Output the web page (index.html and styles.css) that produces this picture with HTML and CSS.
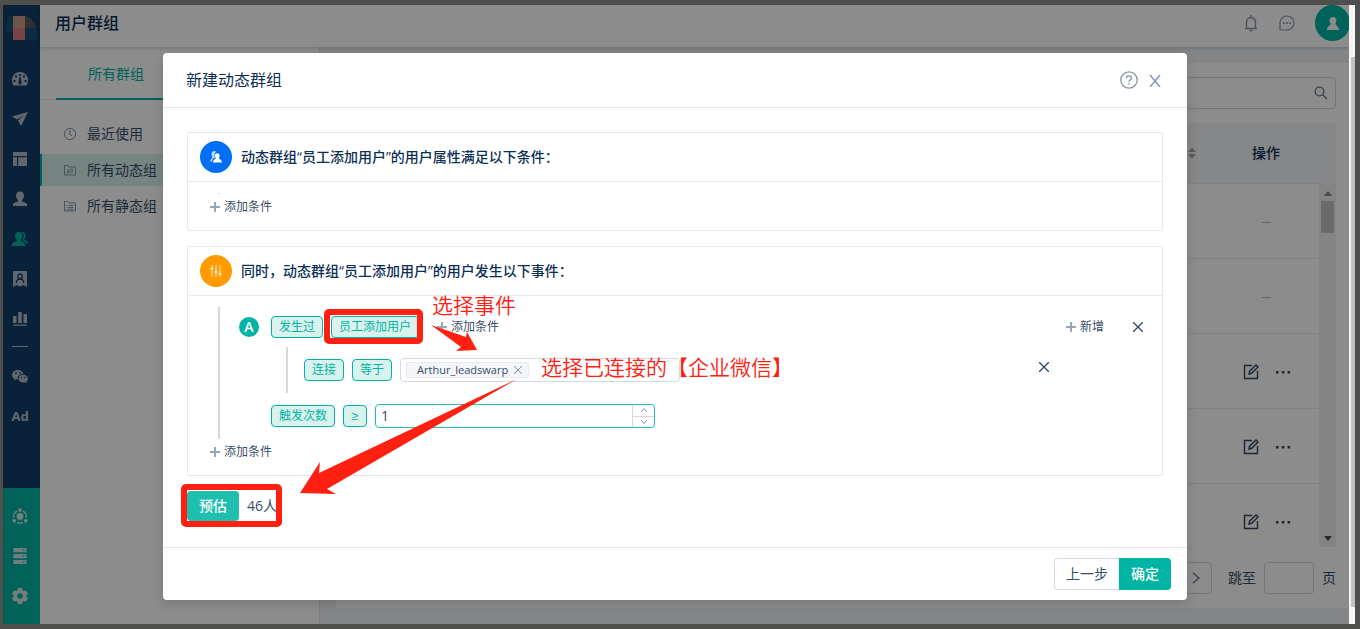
FILE: index.html
```html
<!DOCTYPE html>
<html lang="zh-CN">
<head>
    <meta charset="UTF-8">
    <meta name="viewport" content="width=device-width, initial-scale=1.0">
    <title>用户群组</title>
    <link rel="stylesheet" href="styles.css">
</head>
<body>
    <div class="app">
        <nav class="sidebar">
            <a class="logo" href="#" aria-label="首页">
                <svg width="32" height="32" viewBox="0 0 32 32">
                    <path d="M2 2Q1 0 7 0V16H1Q-1 9 2 2z" fill="#1c4f7c"/>
                    <path d="M7 0H19V12H7z" fill="#c89b88"/>
                    <path d="M19 0Q26 0 30 12H19z" fill="#55585c"/>
                    <path d="M7 12H19V24H7z" fill="#dc7a7e"/>
                    <path d="M19 12H30Q33 20 31 24H19z" fill="#1c4f7c"/>
                    <path d="M9 24H19V32Q12 30 9 24z" fill="#1b3c60"/>
                </svg>
            </a>
            <div class="side-top">
                <a href="#" aria-label="仪表盘"><svg width="16" height="16" viewBox="0 0 16 16"><path fill="currentColor" fill-rule="evenodd" d="M8 1a8 8 0 0 0-8 8c0 2 .6 4 1.500 5.500h13A9 9 0 0 0 16 9a8 8 0 0 0-8-8zM7 3h2v1.800H7zM3 4.500h2v2H3zM11 4.500h2v2h-2zM1.500 9h2v2h-2zM12.500 9h2v2h-2zM7.400 6h1.200l.8 5.500a1.500 1.500 0 1 1-2.800 0z"/></svg></a>
                <a href="#" aria-label="发送"><svg width="16" height="16" viewBox="0 0 16 16"><path fill="currentColor" d="M16 1 0 5.500 5 8.500 12 4 6 9.500 9 15z"/></svg></a>
                <a href="#" aria-label="页面"><svg width="16" height="16" viewBox="0 0 16 16"><path fill="currentColor" d="M1 1h14v4H1zM1 6.200h4V15H1zM6.200 6.200H15V15H6.200z"/></svg></a>
                <a href="#" aria-label="用户"><svg width="16" height="16" viewBox="0 0 16 16"><path fill="currentColor" d="M8 .5c2.500 0 4 1.800 4 4.200 0 1.800-.8 3.300-2 4.300v1.300c0 .6 5 1.200 5 3.200V15H1v-1.500c0-2 5-2.600 5-3.200V9C4.800 8 4 6.500 4 4.700 4 2.300 5.500.5 8 .5z"/></svg></a>
                <a class="on" href="#" aria-label="用户群组"><svg width="16" height="16" viewBox="0 0 16 16"><path fill="currentColor" d="M6.800 1c2.300 0 3.700 1.600 3.700 3.800 0 1.700-.8 3-1.800 3.900V10c0 .7 4.300 1.300 4.300 3.400V15H0v-1.600C0 11.300 5 10.700 5 10V8.700C3.900 7.800 3 6.500 3 4.800 3 2.600 4.500 1 6.800 1z"/><path d="M10 1.500c2.500.2 3.300 2.300 2.500 4.500-.4 1.200-1.200 1.900-1 3 .3 1 3.800 1.200 3.800 3.500" fill="none" stroke="currentColor" stroke-width="1.500"/></svg></a>
                <a href="#" aria-label="标签"><svg width="16" height="16" viewBox="0 0 16 16"><path fill="currentColor" d="M1 0h14v16l-3.500-2L8 15.500 4.500 14 1 16z"/><circle cx="8" cy="5.300" r="2.300" fill="none" stroke="#123c68" stroke-width="1.300"/><path d="M4.200 12Q4.500 8 8 8t3.800 4" fill="none" stroke="#123c68" stroke-width="1.300"/></svg></a>
                <a href="#" aria-label="统计"><svg width="16" height="16" viewBox="0 0 16 16"><path fill="currentColor" d="M1 5h3.500v7H1zM6.200 1h3.500v11H6.200zM11.500 3H15v9h-3.500zM1 13.500h14v1.200H1z"/></svg></a>
                <hr>
                <a href="#" aria-label="微信"><svg width="16" height="16" viewBox="0 0 16 16"><path fill="currentColor" fill-rule="evenodd" d="M6 2C2.700 2 0 4.200 0 6.900c0 1.600.9 2.900 2.300 3.800L1.800 12.500l2.200-1.200c.7.200 1.200.3 1.800.2C5 8.500 7.500 5.800 11.500 6 11 3.700 8.700 2 6 2zM4 4.300a.8.800 0 1 1 0 1.700.8.800 0 0 1 0-1.700zm4 0a.8.800 0 1 1 0 1.700.8.800 0 0 1 0-1.700z"/><path fill="currentColor" fill-rule="evenodd" d="M11.200 6.800c-2.700 0-4.700 1.800-4.700 3.900s2.100 3.900 4.700 3.900c.6 0 1.200-.1 1.700-.3l1.700.9-.5-1.500c1.100-.7 1.900-1.800 1.900-3 0-2.100-2.100-3.900-4.800-3.900zM9.600 8.800a.7.700 0 1 1 0 1.400.7.700 0 0 1 0-1.400zm3.200 0a.7.700 0 1 1 0 1.400.7.700 0 0 1 0-1.400z"/></svg></a>
                <a class="ad" href="#">Ad</a>
            </div>
            <div class="side-bottom">
                <a href="#" aria-label="连接"><svg width="16" height="16" viewBox="0 0 16 16"><circle cx="8" cy="8.500" r="3.400" fill="currentColor"/><g fill="currentColor"><circle cx="8" cy="2" r="1.900"/><circle cx="2.200" cy="12.800" r="1.900"/><circle cx="13.800" cy="12.800" r="1.900"/></g><path d="M5 3.200A6.300 6.300 0 0 0 1.700 10M11 3.200A6.300 6.300 0 0 1 14.300 10M5 14.700q3 1 6 0" fill="none" stroke="currentColor" stroke-width="1.300"/></svg></a>
                <a href="#" aria-label="数据"><svg width="16" height="16" viewBox="0 0 16 16"><path fill="currentColor" fill-rule="evenodd" d="M1.500 0h13v4.300h-13zM1.500 6h13v4.300h-13zM1.500 12h13v4h-13zM10.500 1.600v1h2v-1zM10.500 7.600v1h2v-1zM10.500 13.600v1h2v-1z"/></svg></a>
                <a href="#" aria-label="设置"><svg width="16" height="16" viewBox="0 0 16 16"><path fill="currentColor" fill-rule="evenodd" d="M6 0h4l.5 2.300 1.300.7 2.200-.8 2 3.500-1.700 1.500v1.600l1.700 1.500-2 3.500-2.200-.8-1.300.7L10 16H6l-.5-2.300-1.300-.7-2.200.8-2-3.500 1.700-1.500V7.200L0 5.700l2-3.500 2.200.8 1.300-.7zM8 5.200a2.800 2.800 0 1 0 0 5.600 2.800 2.800 0 0 0 0-5.600z"/></svg></a>
            </div>
        </nav>

        <div class="main">
            <header class="topbar">
                <h1>用户群组</h1>
                <div class="top-actions">
                    <button class="icon-btn" aria-label="通知"><svg width="16" height="18" viewBox="0 0 16 18"><path d="M2 14.500h12M3.500 14V8a4.500 4.500 0 0 1 9 0v6M8 3.500V1M6.500 16.500h3" fill="none" stroke="currentColor" stroke-width="1.400"/></svg></button>
                    <button class="icon-btn" aria-label="消息"><svg width="16" height="16" viewBox="0 0 16 16"><path d="M1 15V8a7 7 0 1 1 7 7z" fill="none" stroke="currentColor" stroke-width="1.200"/><path d="M4 7.300h1.600v1.600H4zM7.200 7.300h1.600v1.600H7.200zM10.400 7.300H12v1.600h-1.600z" fill="currentColor"/></svg></button>
                    <button class="avatar" aria-label="账户"><svg width="12" height="13" viewBox="0 0 12 13"><path fill="currentColor" d="M6 0c2.200 0 3.500 1.400 3.500 3.500C9.500 5.200 8.300 6 8.300 7.200 8.300 8.200 12 9 12 13H0c0-4 3.700-4.800 3.700-5.800C3.700 6 2.500 5.200 2.500 3.500 2.500 1.400 3.800 0 6 0z"/></svg></button>
                </div>
            </header>
            <div class="columns">
                <aside class="groups">
                    <div class="tabs"><a class="tab" href="#">所有群组</a></div>
                    <ul class="group-menu">
                        <li><a href="#"><svg width="14" height="14" viewBox="0 0 14 14"><circle cx="7" cy="7" r="5.600"/><path d="M6.800 3.500v4l2.200 1.300"/></svg>最近使用</a></li>
                        <li class="current"><a href="#"><svg width="14" height="14" viewBox="0 0 14 14"><path d="M1.500 2.500H5L6 4h6.500v8h-11zM4 7h6L8.500 5.500M10 9H4l1.500 1.500"/></svg>所有动态组</a></li>
                        <li><a href="#"><svg width="14" height="14" viewBox="0 0 14 14"><path d="M1.500 2.500H5L6 4h6.500v8h-11zM3.500 6.500h1M5.500 6.500h5M3.500 8.500h1M5.500 8.500h5M3.500 10.300h1M5.500 10.300h5"/></svg>所有静态组</a></li>
                    </ul>
                </aside>
                <section class="content">
                    <div class="card">
                        <div class="search">
                            <input type="text" aria-label="搜索">
                            <svg width="14" height="14" viewBox="0 0 14 14"><circle cx="5.500" cy="5.500" r="4.300"/><path d="M8.700 8.700 13 13"/></svg>
                        </div>
                        <table class="list list-head">
                            <tr>
                                <th class="sortable"><svg width="8" height="12" viewBox="0 0 8 12"><path d="M0 5l4-4.500L8 5zM0 7h8l-4 4.500z" fill="#a5a5a5"/></svg></th>
                                <th class="ops">操作</th>
                                <th class="gutter"></th>
                            </tr>
                        </table>
                        <div class="list-body">
                            <table class="list">
                                <tr><td></td><td class="ops"><i class="dash"></i></td></tr>
                                <tr><td></td><td class="ops"><i class="dash"></i></td></tr>
                                <tr><td></td><td class="ops"><div class="row-ops"><button class="icon-btn" aria-label="编辑"><svg width="16" height="16" viewBox="0 0 16 16"><path d="M9 1.500H1.500v13h13V7M6 10l.6-2.800L13 1l2 2-6.300 6.300z"/></svg></button><button class="icon-btn" aria-label="更多"><svg width="16" height="16" viewBox="0 0 16 16"><path class="dots" d="M1 7h2.500v2.500H1zM6.800 7h2.500v2.500H6.800zM12.600 7h2.500v2.500h-2.500z"/></svg></button></div></td></tr>
                                <tr><td></td><td class="ops"><div class="row-ops"><button class="icon-btn" aria-label="编辑"><svg width="16" height="16" viewBox="0 0 16 16"><path d="M9 1.500H1.500v13h13V7M6 10l.6-2.800L13 1l2 2-6.300 6.300z"/></svg></button><button class="icon-btn" aria-label="更多"><svg width="16" height="16" viewBox="0 0 16 16"><path class="dots" d="M1 7h2.500v2.500H1zM6.800 7h2.500v2.500H6.800zM12.600 7h2.500v2.500h-2.500z"/></svg></button></div></td></tr>
                                <tr><td></td><td class="ops"><div class="row-ops"><button class="icon-btn" aria-label="编辑"><svg width="16" height="16" viewBox="0 0 16 16"><path d="M9 1.500H1.500v13h13V7M6 10l.6-2.800L13 1l2 2-6.300 6.300z"/></svg></button><button class="icon-btn" aria-label="更多"><svg width="16" height="16" viewBox="0 0 16 16"><path class="dots" d="M1 7h2.500v2.500H1zM6.800 7h2.500v2.500H6.800zM12.600 7h2.500v2.500h-2.500z"/></svg></button></div></td></tr>
                            </table>
                            <div class="list-scroll">
                                <svg width="8" height="5" viewBox="0 0 8 5"><path d="M0 5l4-5 4 5z" fill="#858585"/></svg>
                                <div class="list-thumb"></div>
                                <svg class="down" width="8" height="5" viewBox="0 0 8 5"><path d="M0 0h8L4 5z" fill="#505050"/></svg>
                            </div>
                        </div>
                        <div class="pager">
                            <button class="next" aria-label="下一页"><svg width="8" height="12" viewBox="0 0 8 12"><path d="M1 1l6 5-6 5"/></svg></button>
                            <label for="page">跳至</label>
                            <input id="page" type="text">
                            <span>页</span>
                        </div>
                    </div>
                </section>
            </div>
        </div>

        <div class="mask">
            <div class="modal" role="dialog" aria-labelledby="modalTitle">
                <div class="modal-head">
                    <h2 id="modalTitle">新建动态群组</h2>
                    <button class="icon-btn" aria-label="帮助"><svg width="18" height="18" viewBox="0 0 18 18" fill="none" stroke="currentColor"><circle cx="9" cy="9" r="8.200" stroke-width="1.300"/><path d="M6.500 7.200c0-3 5-3 5-.2 0 1.700-2.500 1.800-2.500 3.800M9 12v1.500" stroke-width="1.400"/></svg></button>
                    <button class="icon-btn" aria-label="关闭"><svg width="12" height="14" viewBox="0 0 12 14" fill="none" stroke="currentColor" stroke-width="1.400"><path d="M1 2l10 12M11 2L1 14"/></svg></button>
                </div>

                <div class="modal-body">
                    <section class="panel">
                        <div class="panel-head">
                            <span class="round blue"><svg width="14" height="14" viewBox="0 0 14 14"><path fill="#bcd8ff" d="M2.500 4.200C2.500 2 3.800 1 5.500 1c.8 0 1.300.2 1.800.6C5 3.500 5 6 6 7.500 4 8.500 3 10 3 11.500H1C1 9 3.500 8.500 3.500 7c-.7-.7-1-1.500-1-2.800z"/><path fill="#fff" d="M8.300 3.200c1.500 0 2.400 1 2.400 2.500 0 1.200-.9 1.700-.9 2.600 0 .8 3.200 1.200 3.200 4.200H4c0-3 2.800-3.400 2.800-4.200 0-.9-.9-1.400-.9-2.600 0-1.500.9-2.500 2.400-2.500z"/></svg></span>
                            <h3>动态群组“员工添加用户”的用户属性满足以下条件：</h3>
                        </div>
                        <div class="panel-body">
                            <div class="rules empty"></div>
                            <button class="add"><svg width="10" height="10" viewBox="0 0 10 10"><path d="M5 0v10M0 5h10"/></svg>添加条件</button>
                        </div>
                    </section>

                    <section class="panel">
                        <div class="panel-head">
                            <span class="round orange"><svg width="12" height="14" viewBox="0 0 12 14" fill="none" stroke="#fff"><path d="M2 1v12M6 1v12M10 1v12" stroke-opacity=".8"/><path d="M.5 4.500h3M4.500 8h3M8.500 10h3" stroke-width="1.500"/></svg></span>
                            <h3>同时，动态群组“员工添加用户”的用户发生以下事件：</h3>
                        </div>
                        <div class="panel-body">
                            <div class="rules">
                                <div class="rule">
                                    <span class="mark">A</span>
                                    <button class="chip">发生过</button>
                                    <button class="chip">员工添加用户</button>
                                    <button class="add inline"><svg width="10" height="10" viewBox="0 0 10 10"><path d="M5 0v10M0 5h10"/></svg>添加条件</button>
                                    <div class="rule-end">
                                        <button class="add"><svg width="10" height="10" viewBox="0 0 10 10"><path d="M5 0v10M0 5h10"/></svg>新增</button>
                                        <button class="remove" aria-label="删除"><svg width="10" height="10" viewBox="0 0 10 10"><path d="M0 0l10 10M10 0L0 10"/></svg></button>
                                    </div>
                                </div>
                                <div class="rule sub">
                                    <button class="chip">连接</button>
                                    <button class="chip">等于</button>
                                    <div class="picker">
                                        <span class="tag">Arthur_leadswarp<button aria-label="移除"><svg width="8" height="8" viewBox="0 0 8 8"><path d="M0 0l8 8M8 0L0 8"/></svg></button></span>
                                    </div>
                                    <button class="remove" aria-label="删除"><svg width="10" height="10" viewBox="0 0 10 10"><path d="M0 0l10 10M10 0L0 10"/></svg></button>
                                </div>
                                <div class="rule times">
                                    <button class="chip">触发次数</button>
                                    <button class="chip op">≥</button>
                                    <div class="stepper">
                                        <input type="text" value="1" aria-label="触发次数">
                                        <div class="steps">
                                            <button aria-label="增加"><svg width="6" height="4" viewBox="0 0 6 4"><path d="M0 4l3-3.500L6 4"/></svg></button>
                                            <button aria-label="减少"><svg width="6" height="4" viewBox="0 0 6 4"><path d="M0 0l3 3.500L6 0"/></svg></button>
                                        </div>
                                    </div>
                                </div>
                            </div>
                            <button class="add"><svg width="10" height="10" viewBox="0 0 10 10"><path d="M5 0v10M0 5h10"/></svg>添加条件</button>
                        </div>
                    </section>

                    <div class="estimate">
                        <button class="primary">预估</button>
                        <span>46人</span>
                    </div>
                </div>

                <div class="modal-foot">
                    <button class="plain">上一步</button>
                    <button class="ok">确定</button>
                </div>

                <!-- red callouts over the form -->
                <svg class="notes" width="1024" height="547" viewBox="163 53 1024 547">
                    <rect x="327" y="312" width="93" height="29" rx="2"/>
                    <rect x="184" y="487" width="95" height="37" rx="2"/>
                    <path d="M431 325L466 337 467 332 477 350 456 351 461 347z"/>
                    <path d="M517 379L319 473 320 462 300 493 336 494 327 489z"/>
                    <text x="432" y="313">选择事件</text>
                    <text x="541" y="375">选择已连接的【企业微信】</text>
                </svg>
            </div>
        </div>
    </div>
    <div class="page-scroll"><div class="page-thumb"></div></div>
</body>
</html>
```
FILE: styles.css
```css
* {
    box-sizing: border-box;
}
body {
    margin: 0;
    height: 100vh;
    padding: 5px 5px 5px 3px;
    display: flex;
    overflow: hidden;
    background: #4f4f4e;
    color: #3a4e67;
    font-family: "Open Sans", "Noto Sans CJK SC", sans-serif;
    font-size: 14px;
    line-height: 20px;
}
h1, h2, h3, ul {
    margin: 0;
    padding: 0;
    list-style: none;
}
button, input {
    font: inherit;
    color: inherit;
}
button {
    margin: 0;
    padding: 0;
    border: 0;
    background: none;
    cursor: pointer;
}
a {
    color: inherit;
    text-decoration: none;
}
svg {
    display: block;
    flex: none;
}
.icon-btn {
    color: #8595a8;
}
.app {
    flex: 1;
    min-width: 0;
    display: flex;
    position: relative;
    overflow: hidden;
    background: #fff;
}

/* left navigation */
.sidebar {
    width: 37px;
    display: flex;
    flex-direction: column;
    background: #123c68;
    color: #b1bccb;
}
.sidebar a {
    height: 40px;
    display: flex;
    align-items: center;
    justify-content: center;
    padding-right: 3px;
}
.sidebar .logo {
    height: 54px;
    padding: 0 1px 0 2px;
}
.sidebar .on {
    color: #00b4a4;
}
.sidebar .ad {
    font-family: "Noto Sans", sans-serif;
    font-size: 13px;
    font-weight: 700;
}
.sidebar hr {
    width: 16px;
    height: 1px;
    margin: 7px 9px 9px;
    border: 0;
    background: #b1bccb;
}
.side-bottom {
    margin-top: auto;
    padding: 8px 0;
    background: #00b4a4;
    color: #d5e2e4;
}

/* page behind the dialog */
.main {
    flex: 1;
    min-width: 0;
    display: flex;
    flex-direction: column;
}
.topbar {
    height: 42px;
    display: flex;
    align-items: flex-start;
    justify-content: space-between;
    padding-left: 15px;
    background: #fff;
    box-shadow: 0 1px 4px rgba(0, 0, 0, .2);
    z-index: 1;
}
.topbar h1 {
    color: #0c2f56;
    font-size: 16px;
    font-weight: 500;
    line-height: 36px;
}
.top-actions {
    display: flex;
    align-items: center;
    gap: 20px;
    margin-right: -1px;
}
.avatar {
    width: 35px;
    height: 36px;
    border-radius: 50%;
    background: #00b4a4;
    color: #fff;
    display: flex;
    align-items: center;
    justify-content: center;
}
.columns {
    flex: 1;
    display: flex;
    min-height: 0;
}
.groups {
    width: 280px;
    border-right: 1px solid #e6e9ee;
}
.tabs {
    height: 53px;
    padding-left: 16px;
    border-bottom: 1px solid #e6e9ee;
}
.tab {
    display: block;
    width: 120px;
    height: 53px;
    border-bottom: 2px solid #00b4a4;
    color: #00b4a4;
    line-height: 54px;
    text-align: center;
}
.group-menu {
    padding-top: 18px;
}
.group-menu li {
    height: 32px;
    margin-bottom: 4px;
    border-left: 2px solid transparent;
}
.group-menu a {
    height: 32px;
    display: flex;
    align-items: center;
    gap: 10px;
    padding-left: 21px;
}
.group-menu svg {
    fill: none;
    stroke: #8595a8;
}
.group-menu .current {
    border-color: #00b4a4;
    background: #d9f2ed;
}
.content {
    flex: 1;
    min-width: 0;
    padding: 16px 0 16px 16px;
    background: #f0f2f5;
}
.card {
    height: 100%;
    padding: 14px 13px 0 16px;
    background: #fff;
}
.search {
    height: 32px;
    display: flex;
    align-items: center;
    padding-right: 7px;
    border: 1px solid #cfd5dc;
    border-radius: 4px;
}
.search input {
    flex: 1;
    border: 0;
    background: none;
}
.search svg, .next svg {
    fill: none;
    stroke: #63758c;
    stroke-width: 1.3;
}
.list {
    width: 100%;
    border-collapse: collapse;
    table-layout: fixed;
}
.list-head {
    margin-top: 14px;
    background: #f4f6f8;
}
.list th {
    height: 60px;
    padding: 0;
    color: #0c2f56;
    font-weight: 500;
}
.list .sortable {
    padding-right: 17px;
}
.sortable svg {
    margin-left: auto;
}
.list .ops {
    width: 106px;
}
.list .gutter {
    width: 17px;
}
.list td {
    height: 75px;
    padding: 0;
    border-top: 1px solid #e6e9ee;
    text-align: center;
}
.dash {
    display: inline-block;
    width: 9px;
    height: 1px;
    background: #b1bccb;
    vertical-align: middle;
}
.row-ops {
    display: flex;
    justify-content: center;
    gap: 16px;
    padding: 2px 0 0 2px;
}
.row-ops svg {
    fill: none;
    stroke: #33475f;
    stroke-width: 1.4;
}
.row-ops .dots {
    fill: #33475f;
    stroke: none;
}
.list-body {
    height: 364px;
    display: flex;
    overflow: hidden;
}
.list-scroll {
    width: 17px;
    flex: none;
    display: flex;
    flex-direction: column;
    align-items: center;
    padding: 8px 0 6px;
    background: #f1f1f1;
}
.list-thumb {
    width: 13px;
    height: 32px;
    margin-top: 5px;
    background: #c1c1c1;
}
.list-scroll .down {
    margin-top: auto;
}
.pager {
    display: flex;
    align-items: center;
    justify-content: flex-end;
    gap: 8px;
    margin-top: 15px;
}
.next {
    width: 32px;
    height: 32px;
    display: flex;
    align-items: center;
    justify-content: center;
    border: 1px solid #cfd5dc;
    border-radius: 4px;
    margin-right: 8px;
}
.pager input {
    width: 50px;
    height: 32px;
    border: 1px solid #cfd5dc;
    border-radius: 4px;
    background: none;
}

/* dialog */
.mask {
    position: absolute;
    inset: 0;
    z-index: 2;
    display: flex;
    align-items: flex-start;
    justify-content: center;
    padding: 48px 2px 0 0;
    background: rgba(0, 0, 0, .45);
}
.modal {
    position: relative;
    width: 1024px;
    max-width: 100%;
    border-radius: 4px;
    background: #fff;
    box-shadow: 0 4px 12px rgba(0, 0, 0, .15);
}
.modal-head {
    height: 55px;
    display: flex;
    align-items: center;
    gap: 11px;
    padding: 0 26px 0 23px;
    border-bottom: 1px solid #e8e8e8;
}
.modal-head h2 {
    margin-right: auto;
    color: #0c2f56;
    font-size: 16px;
    font-weight: 400;
}
.modal-body {
    padding: 24px 24px 26px;
}
.panel {
    margin-bottom: 15px;
    border: 1px solid #e8e8e8;
    border-radius: 2px;
}
.panel-head {
    height: 49px;
    display: flex;
    align-items: center;
    gap: 9px;
    padding-left: 12px;
    border-bottom: 1px solid #e8e8e8;
}
.panel-head h3 {
    color: #0c2f56;
    font-size: 14px;
    font-weight: 500;
}
.round {
    width: 32px;
    height: 32px;
    border-radius: 50%;
    display: flex;
    align-items: center;
    justify-content: center;
}
.blue {
    background: #006ef5;
}
.orange {
    background: #ff9b00;
}
.panel-body {
    padding: 11px 19px 14px 22px;
}
.rules {
    margin-left: 8px;
    padding: 4px 0 7px 19px;
    border-left: 2px solid #d3dae2;
}
.rules.empty {
    height: 1px;
    padding: 0;
}
.rule {
    height: 32px;
    display: flex;
    align-items: center;
    gap: 8px;
}
.sub {
    height: 46px;
    margin: 4px 94px 7px 47px;
    padding-left: 16px;
    border-left: 2px solid #d3dae2;
}
.times {
    margin-left: 32px;
}
.mark {
    width: 20px;
    height: 20px;
    margin-right: 4px;
    border-radius: 50%;
    background: #00b4a4;
    color: #fff;
    font-weight: 600;
    text-align: center;
}
.chip {
    height: 22px;
    padding: 0 7px;
    border: 1px solid #00b4a4;
    border-radius: 4px;
    background: #d9f2ed;
    color: #00b4a4;
    font-size: 12px;
    line-height: 20px;
}
.op {
    width: 24px;
    font-family: "Liberation Sans", sans-serif;
}
.add {
    display: flex;
    align-items: center;
    gap: 4px;
    font-size: 12px;
    line-height: 18px;
}
.panel-body > .add {
    margin-top: 4px;
}
.add svg {
    stroke: #98a6b5;
    stroke-width: 2;
}
.inline {
    margin-left: 10px;
}
.rule-end {
    display: flex;
    align-items: center;
    gap: 29px;
    margin-left: auto;
}
.remove svg {
    stroke: #33475f;
    stroke-width: 1.3;
}
.sub .remove {
    margin: 0 0 6px auto;
}
.picker {
    width: 280px;
    height: 24px;
    display: flex;
    align-items: center;
    padding-left: 5px;
    border: 1px solid #d3dae2;
    border-radius: 4px;
}
.tag {
    height: 16px;
    display: flex;
    align-items: center;
    gap: 6px;
    padding: 0 6px 0 10px;
    border: 1px solid #e6e9ee;
    border-radius: 2px;
    background: #f3f5f8;
    font-size: 11px;
    line-height: 14px;
}
.tag svg {
    stroke: #8595a8;
}
.stepper {
    width: 280px;
    height: 24px;
    display: flex;
    border: 1px solid #1fbfb0;
    border-radius: 4px;
}
.stepper input {
    flex: 1;
    min-width: 0;
    padding: 0 5px;
    border: 0;
    background: none;
    outline: none;
}
.steps {
    width: 22px;
    display: flex;
    flex-direction: column;
    border-left: 1px solid #d3dae2;
}
.steps button {
    flex: 1;
    display: flex;
    align-items: center;
    justify-content: center;
}
.steps button + button {
    border-top: 1px solid #d3dae2;
}
.steps svg {
    fill: none;
    stroke: #8595a8;
}
.estimate {
    display: flex;
    align-items: center;
    gap: 8px;
}
.primary {
    width: 52px;
    height: 30px;
    border-radius: 4px;
    background: #1fbfb0;
    color: #fff;
    font-weight: 500;
}
.modal-foot {
    display: flex;
    justify-content: flex-end;
    padding: 10px 16px;
    border-top: 1px solid #e8e8e8;
}
.plain {
    width: 65px;
    height: 32px;
    border: 1px solid #d3dae2;
    border-right: 0;
    border-radius: 4px 0 0 4px;
}
.ok {
    width: 52px;
    height: 32px;
    border-radius: 0 4px 4px 0;
    background: #00b4a4;
    color: #fff;
    font-weight: 500;
}
.notes {
    position: absolute;
    top: 0;
    left: 0;
    pointer-events: none;
    fill: #ff2011;
    font-size: 21px;
    font-weight: 350;
}
.notes rect {
    fill: none;
    stroke: #ff2011;
    stroke-width: 6;
}

/* browser scrollbar */
.page-scroll {
    width: 6px;
    padding: 52px 0 17px 2px;
    background: #f5f5f5;
}
.page-thumb {
    height: 100%;
    background: #c1c1c1;
}
```
